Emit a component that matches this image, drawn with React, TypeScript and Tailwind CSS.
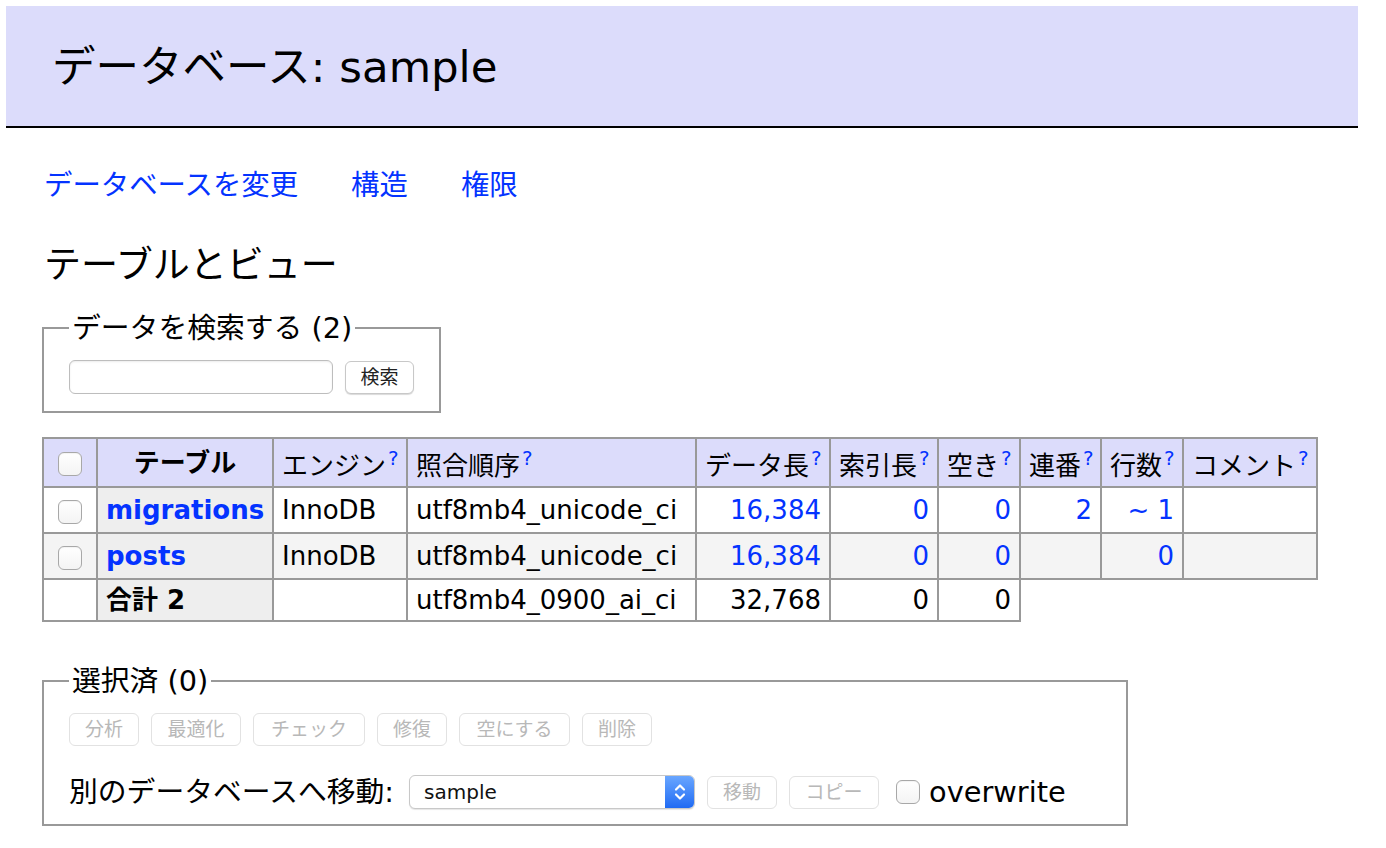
import React from "react";

const BLUE = "text-[#0433ff]";

function Help() {
  return <sup className={`text-[20px] ${BLUE} ml-[2px] top-[-10px]`}>?</sup>;
}

function Check({ className = "" }: { className?: string }) {
  return (
    <span
      className={`inline-block w-[24px] h-[24px] rounded-[6px] border border-[#a8a8a8] bg-linear-to-b from-white to-[#f4f4f4] shadow-[inset_0_1px_1px_rgba(0,0,0,0.05)] align-middle ${className}`}
    />
  );
}

function SmallButton({ label, disabled = true, w }: { label: string; disabled?: boolean; w: string }) {
  return (
    <button
      className={`h-[33px] ${w} rounded-[6px] border bg-white text-[19px] leading-none ${
        disabled
          ? "border-[#e2e2e2] text-[#b8b8b8]"
          : "border-[#c8c8c8] text-[#222] shadow-[0_1px_1px_rgba(0,0,0,0.15)]"
      }`}
    >
      {label}
    </button>
  );
}

const td = "border-2 border-[#999] px-[8px] align-middle";
const num = `${td} text-right`;

const headers = ["エンジン", "照合順序", "データ長", "索引長", "空き", "連番", "行数", "コメント"];

export default function App() {
  return (
    <div className="min-h-screen bg-white text-black font-['DejaVu_Sans','Noto_Sans_CJK_JP',sans-serif] text-[28.8px] pb-[20px]">
      {/* Page title */}
      <div className="mt-[6px] ml-[6px] mr-[28px] h-[122px] bg-[#dcdcfb] border-b-2 border-black flex items-center pl-[46px]">
        <h2 className="text-[43.5px] leading-none font-normal pt-[3px]">データベース: sample</h2>
      </div>

      <div className="pl-[42px]">
        {/* Links */}
        <p className="mt-[40px] ml-[2px] flex gap-[53px] leading-[36px] text-[28.4px]">
          <a className={BLUE}>データベースを変更</a>
          <a className={BLUE}>構造</a>
          <a className={BLUE}>権限</a>
        </p>

        <h3 className="mt-[39px] ml-[2px] text-[37px] leading-[46px] font-normal">テーブルとビュー</h3>

        {/* Search */}
        <fieldset className="mt-[21px] w-[399px] border-2 border-[#999] px-[25px] pt-[14px] pb-[17px]">
          <legend className="px-[3px] leading-[36px]">データを検索する (2)</legend>
          <div className="flex items-center gap-[12px]">
            <input className="w-[264px] h-[34px] rounded-[6px] border border-[#bdbdbd] bg-white shadow-[inset_0_1px_2px_rgba(0,0,0,0.08)]" />
            <SmallButton label="検索" disabled={false} w="w-[69px]" />
          </div>
        </fieldset>

        {/* Tables */}
        <table className="mt-[24px] w-[1276px] table-fixed border-collapse text-[26px] leading-[32px]">
          <colgroup>
            <col className="w-[54px]" />
            <col className="w-[176px]" />
            <col className="w-[134px]" />
            <col className="w-[289px]" />
            <col className="w-[134px]" />
            <col className="w-[108px]" />
            <col className="w-[82px]" />
            <col className="w-[81px]" />
            <col className="w-[82px]" />
            <col className="w-[134px]" />
          </colgroup>
          <thead>
            <tr className="h-[49px] bg-[#dcdcfb]">
              <td className={`${td} text-center`}>
                <Check />
              </td>
              <th className={`${td} text-center font-bold`}>テーブル</th>
              {headers.map((h) => (
                <th key={h} className={`${td} text-left font-normal whitespace-nowrap pt-[6px]`}>
                  {h}
                  <Help />
                </th>
              ))}
            </tr>
          </thead>
          <tbody>
            <tr className="h-[46px]">
              <td className={`${td} text-center`}>
                <Check />
              </td>
              <th className={`${td} text-left bg-[#eee] font-bold ${BLUE}`}>migrations</th>
              <td className={td}>InnoDB</td>
              <td className={td}>utf8mb4_unicode_ci</td>
              <td className={`${num} ${BLUE}`}>16,384</td>
              <td className={`${num} ${BLUE}`}>0</td>
              <td className={`${num} ${BLUE}`}>0</td>
              <td className={`${num} ${BLUE}`}>2</td>
              <td className={`${num} ${BLUE}`}>~ 1</td>
              <td className={td}></td>
            </tr>
            <tr className="h-[46px] bg-[#f4f4f4]">
              <td className={`${td} text-center`}>
                <Check />
              </td>
              <th className={`${td} text-left bg-[#eee] font-bold ${BLUE}`}>posts</th>
              <td className={td}>InnoDB</td>
              <td className={td}>utf8mb4_unicode_ci</td>
              <td className={`${num} ${BLUE}`}>16,384</td>
              <td className={`${num} ${BLUE}`}>0</td>
              <td className={`${num} ${BLUE}`}>0</td>
              <td className={num}></td>
              <td className={`${num} ${BLUE}`}>0</td>
              <td className={td}></td>
            </tr>
            <tr className="h-[42px]">
              <td className={td}></td>
              <th className={`${td} text-left bg-[#eee] font-bold`}>合計 2</th>
              <td className={td}></td>
              <td className={td}>utf8mb4_0900_ai_ci</td>
              <td className={num}>32,768</td>
              <td className={num}>0</td>
              <td className={num}>0</td>
            </tr>
          </tbody>
        </table>

        {/* Selected actions */}
        <fieldset className="mt-[41px] w-[1086px] border-2 border-[#999] px-[25px] pt-[14px] pb-[14px]">
          <legend className="px-[3px] leading-[36px]">選択済 (0)</legend>
          <div className="flex items-center gap-[12px]">
            <SmallButton label="分析" w="w-[70px]" />
            <SmallButton label="最適化" w="w-[90px]" />
            <SmallButton label="チェック" w="w-[112px]" />
            <SmallButton label="修復" w="w-[70px]" />
            <SmallButton label="空にする" w="w-[111px]" />
            <SmallButton label="削除" w="w-[70px]" />
          </div>
          <div className="mt-[28px] flex items-center">
            <span className="leading-[36px]">別のデータベースへ移動:</span>
            <div className="ml-[15px] w-[286px] h-[34px] rounded-[6px] border border-[#c8c8c8] bg-white flex items-stretch overflow-hidden shadow-[0_1px_1px_rgba(0,0,0,0.1)]">
              <span className="flex-1 pl-[14px] text-[20px] leading-[32px] text-[#111]">sample</span>
              <span className="w-[29px] bg-linear-to-b from-[#69a6ff] to-[#1f6af3] flex items-center justify-center">
                <svg width="14" height="22" viewBox="0 0 14 22" fill="none" stroke="white" strokeWidth="2.2" strokeLinecap="round" strokeLinejoin="round">
                  <path d="M3 8.5 L7 4.5 L11 8.5" />
                  <path d="M3 13.5 L7 17.5 L11 13.5" />
                </svg>
              </span>
            </div>
            <div className="ml-[12px] flex gap-[12px]">
              <SmallButton label="移動" w="w-[70px]" />
              <SmallButton label="コピー" w="w-[90px]" />
            </div>
            <Check className="ml-[17px] mr-[9px]" />
            <span className="leading-[36px]">overwrite</span>
          </div>
        </fieldset>
      </div>
    </div>
  );
}
